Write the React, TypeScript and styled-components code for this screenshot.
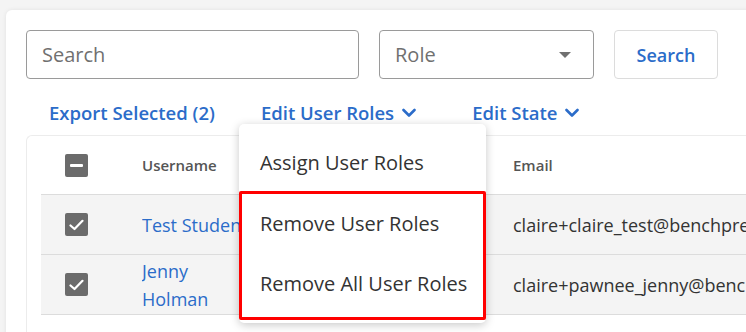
import React from "react";
import styled, { createGlobalStyle } from "styled-components";

const Global = createGlobalStyle`
  html, body { margin: 0; padding: 0; background: #f4f4f4; overflow: hidden; }
  body { font-family: "Open Sans", "Noto Sans", sans-serif; color: #333; }
  * { box-sizing: border-box; }
`;

const Page = styled.div`
  width: 746px;
  height: 332px;
  padding: 10px 0 0 6px;
  overflow: hidden;
`;

const Card = styled.div`
  background: #fff;
  border-radius: 6px 0 0 0;
  box-shadow: 0 0 4px rgba(0, 0, 0, 0.08);
  padding: 20px 0 0 20px;
  height: 340px;
  width: 760px;
`;

const Toolbar = styled.div`
  display: flex;
  align-items: center;
  height: 49px;
`;

const SearchInput = styled.div`
  width: 333px;
  height: 49px;
  border: 1px solid #9a9a9a;
  border-radius: 4px;
  display: flex;
  align-items: center;
  padding-left: 15px;
  font-size: 20px;
  color: #707070;
`;

const Select = styled.div`
  margin-left: 20px;
  width: 215px;
  height: 49px;
  border: 1px solid #9a9a9a;
  border-radius: 4px;
  display: flex;
  align-items: center;
  justify-content: space-between;
  padding: 0 22px 0 15px;
  font-size: 20px;
  color: #707070;
`;

const Caret = styled.span`
  width: 0;
  height: 0;
  border-left: 6px solid transparent;
  border-right: 6px solid transparent;
  border-top: 6px solid #707070;
`;

const Button = styled.div`
  margin-left: 20px;
  width: 104px;
  height: 49px;
  border: 1px solid #dcdcdc;
  border-radius: 4px;
  display: flex;
  align-items: center;
  justify-content: center;
  font-size: 18px;
  font-weight: 600;
  color: #2b6cc9;
`;

const Actions = styled.div`
  display: flex;
  align-items: flex-start;
  height: 56px;
  padding: 22px 0 0 23px;
`;

const ActionLink = styled.div<{ $gap?: number }>`
  position: relative;
  display: flex;
  align-items: center;
  gap: 8px;
  height: 24px;
  line-height: 24px;
  margin-right: ${(p) => p.$gap ?? 0}px;
  font-size: 18.5px;
  font-weight: 600;
  color: #2b6cc9;
  white-space: nowrap;
`;

const Chevron = () => (
  <svg width="14" height="10" viewBox="0 0 14 10" fill="none">
    <path d="M1.5 2 L7 7.5 L12.5 2" stroke="#2b6cc9" strokeWidth="2.6" strokeLinecap="round" strokeLinejoin="round" />
  </svg>
);

const Menu = styled.div`
  position: absolute;
  left: -22px;
  top: 23px;
  width: 247px;
  background: #fff;
  border-radius: 5px;
  box-shadow: 0 2px 10px rgba(0, 0, 0, 0.22);
  padding: 10px 0 3px;
  z-index: 5;
`;

const MenuItem = styled.div<{ $h?: number }>`
  height: ${(p) => p.$h ?? 60}px;
  display: flex;
  align-items: center;
  padding-left: 21px;
  font-size: 20px;
  font-weight: 400;
  color: #333;
`;

const Highlight = styled.div`
  border: 3px solid #ff0000;
  border-radius: 2px;
  padding-bottom: 3px;
  & > div { padding-left: 18px; }
`;

const TableCard = styled.div`
  border: 1px solid #ececec;
  border-right: none;
  border-radius: 6px 0 0 0;
  padding: 0 0 0 14px;
  height: 220px;
`;

const Row = styled.div<{ $alt?: boolean }>`
  display: grid;
  grid-template-columns: 101px 371px 1fr;
  align-items: center;
  height: ${(p) => (p.$alt ? 60 : 59)}px;
  background: ${(p) => (p.$alt ? "#f4f4f4" : "#fff")};
  border-bottom: 1px solid #dcdcdc;
`;

const CheckCell = styled.div`
  padding-left: 24px;
`;

const Cell = styled.div`
  white-space: nowrap;
  overflow: hidden;
`;

const HeadText = styled.div`
  font-size: 15px;
  font-weight: 600;
  color: #555;
`;

const Link = styled.div`
  font-size: 18px;
  color: #2b6cc9;
  line-height: 28px;
`;

const Body = styled.div`
  font-size: 18px;
  color: #333;
`;

const Box = styled.div`
  width: 23px;
  height: 23px;
  border-radius: 2px;
  background: #6b6b6b;
  display: flex;
  align-items: center;
  justify-content: center;
`;

const Check = () => (
  <svg width="15" height="12" viewBox="0 0 15 12" fill="none">
    <path d="M1.5 6.5 L5.5 10 L13.5 1.8" stroke="#fff" strokeWidth="2.2" strokeLinecap="round" strokeLinejoin="round" />
  </svg>
);

const Dash = styled.span`
  width: 13px;
  height: 3px;
  background: #fff;
  border-radius: 1px;
`;

export default function App() {
  return (
    <>
      <Global />
      <Page>
        <Card>
          <Toolbar>
            <SearchInput>Search</SearchInput>
            <Select>
              Role
              <Caret />
            </Select>
            <Button>Search</Button>
          </Toolbar>
          <Actions>
            <ActionLink $gap={46}>Export Selected (2)</ActionLink>
            <ActionLink $gap={56}>
              Edit User Roles <Chevron />
              <Menu>
                <MenuItem $h={57}>Assign User Roles</MenuItem>
                <Highlight>
                  <MenuItem>Remove User Roles</MenuItem>
                  <MenuItem>Remove All User Roles</MenuItem>
                </Highlight>
              </Menu>
            </ActionLink>
            <ActionLink>
              Edit State <Chevron />
            </ActionLink>
          </Actions>
          <TableCard>
            <Row>
              <CheckCell>
                <Box>
                  <Dash />
                </Box>
              </CheckCell>
              <Cell>
                <HeadText>Username</HeadText>
              </Cell>
              <Cell>
                <HeadText>Email</HeadText>
              </Cell>
            </Row>
            <Row $alt>
              <CheckCell>
                <Box>
                  <Check />
                </Box>
              </CheckCell>
              <Cell>
                <Link>Test Student</Link>
              </Cell>
              <Cell>
                <Body>claire+claire_test@benchprep.com</Body>
              </Cell>
            </Row>
            <Row $alt>
              <CheckCell>
                <Box>
                  <Check />
                </Box>
              </CheckCell>
              <Cell>
                <Link>
                  Jenny
                  <br />
                  Holman
                </Link>
              </Cell>
              <Cell>
                <Body>claire+pawnee_jenny@benchprep.com</Body>
              </Cell>
            </Row>
          </TableCard>
        </Card>
      </Page>
    </>
  );
}
